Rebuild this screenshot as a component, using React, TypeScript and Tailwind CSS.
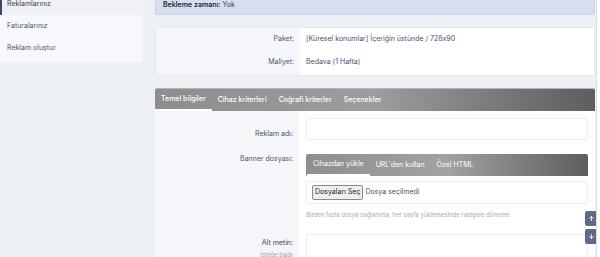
import { ArrowUp, ArrowDown } from "lucide-react";

const SIDEBAR = ["Reklamlarınız", "Faturalarınız", "Reklam oluştur"];
const TABS = ["Temel bilgiler", "Cihaz kriterleri", "Coğrafi kriterler", "Seçenekler"];
const UPLOAD_TABS = ["Cihazdan yükle", "URL'den kullan", "Özel HTML"];

export default function App() {
  return (
    <div
      className="relative flex h-[257px] w-[600px] overflow-hidden bg-[#edf0f5] text-[7px] text-[#4f5668] [font-feature-settings:'calt'_0]"
      style={{ fontFamily: "Inter, 'Noto Sans', sans-serif" }}
    >
      {/* sidebar */}
      <div className="w-[143px] shrink-0">
        <div className="flex flex-col bg-[#f7f8fb] pb-[3px]">
          {SIDEBAR.map((item, i) => (
            <div
              key={item}
              className={
                i === 0
                  ? "flex h-[15px] items-center border-l-2 border-[#3d4a66] bg-[#f0f1f4] pb-[6px] pl-[5px] text-[#3a4254]"
                  : "flex h-[22px] items-center pl-[7px]"
              }
            >
              {item}
            </div>
          ))}
        </div>
      </div>

      {/* main */}
      <div className="ml-[12px] flex w-[440px] flex-col">
        <div className="shrink-0 rounded-b-[2px] border border-t-0 border-[#c8d2e6] bg-[#d7dfef] pb-[4px] pl-[7px] leading-[10px] text-[#2f3645]">
          <span className="font-semibold text-[#1f2533]">Bekleme zamanı:</span> Yok
        </div>

        <div className="mt-[12px] flex shrink-0 border border-[#e6e9f0] bg-white">
          <div className="w-[144px] shrink-0 bg-[#f5f6fa] pb-[1px] pr-[6px] text-right">
            <div className="flex h-[23px] items-center justify-end">Paket:</div>
            <div className="flex h-[23px] items-center justify-end">Maliyet:</div>
          </div>
          <div className="flex-1 pl-[6px] text-[#4a5270]">
            <div className="flex h-[23px] items-center">[Küresel konumlar] İçeriğin üstünde / 728x90</div>
            <div className="flex h-[23px] items-center">Bedava (1 Hafta)</div>
          </div>
        </div>

        <div className="mt-[12px] flex h-[23px] shrink-0 items-stretch rounded-t-[2px] border-t border-[#b5b5b5] bg-linear-to-r from-[#8d8d8d] via-[#9d9d9d] to-[#5e5e5e] font-medium text-white">
          {TABS.map((t, i) => (
            <div
              key={t}
              className={
                i === 0
                  ? "flex items-center border-b-2 border-white px-[6px]"
                  : "flex items-center px-[6px]"
              }
            >
              {t}
            </div>
          ))}
        </div>

        <div className="flex shrink-0 bg-white">
          <div className="w-[144px] shrink-0 bg-[#f5f6fa] pr-[6px] text-right">
            <div className="flex h-[36px] items-end justify-end pb-[8px]">Reklam adı:</div>
            <div className="pt-[7px]">Banner dosyası:</div>
            <div className="pt-[73px] text-[#3a4254]">Alt metin:</div>
            <div className="pt-[2px] text-[6px] text-[#9aa0ad]">İsteğe bağlı</div>
          </div>
          <div className="flex-1 px-[7px] pt-[7px]">
            <div className="h-[22px] rounded-[2px] border border-[#eceef3] bg-white" />
            <div className="mt-[14px] flex h-[22px] items-stretch rounded-t-[2px] bg-linear-to-r from-[#8f8f8f] via-[#a2a2a2] to-[#5e5e5e] pl-[1px] text-white">
              {UPLOAD_TABS.map((t, i) => (
                <div
                  key={t}
                  className={
                    i === 0
                      ? "flex items-center border-b-2 border-white px-[6px]"
                      : "flex items-center px-[6px]"
                  }
                >
                  {t}
                </div>
              ))}
            </div>
            <div className="mt-[5px] flex h-[23px] items-center rounded-[2px] border border-[#eceef3] px-[5px]">
              <span className="rounded-[2px] border border-[#8a8a8a] bg-[#efefef] px-[2px] py-[1px] text-[#222]">
                Dosyaları Seç
              </span>
              <span className="ml-[2px] text-[#4a5270]">Dosya seçilmedi</span>
            </div>
            <div className="mt-[6px] text-[6px] text-[#a3a9b7]">
              Birden fazla dosya sağlanırsa, her sayfa yüklemesinde rastgele dönerler.
            </div>
            <div className="mt-[15px] h-[30px] rounded-[2px] border border-[#eceef3] bg-white" />
          </div>
        </div>
      </div>

      {/* scroll helpers */}
      <div className="absolute right-[3px] top-[211px] flex flex-col gap-[3px]">
        <div className="flex h-[15px] w-[12px] items-center justify-center rounded-[2px] bg-[#5b6b88] text-white">
          <ArrowUp size={7} strokeWidth={3} />
        </div>
        <div className="flex h-[15px] w-[12px] items-center justify-center rounded-[2px] bg-[#5b6b88] text-white">
          <ArrowDown size={7} strokeWidth={3} />
        </div>
      </div>
      <div className="absolute right-0 top-0 h-full w-[4px] border-l border-[#d9dde5] bg-white" />
    </div>
  );
}
